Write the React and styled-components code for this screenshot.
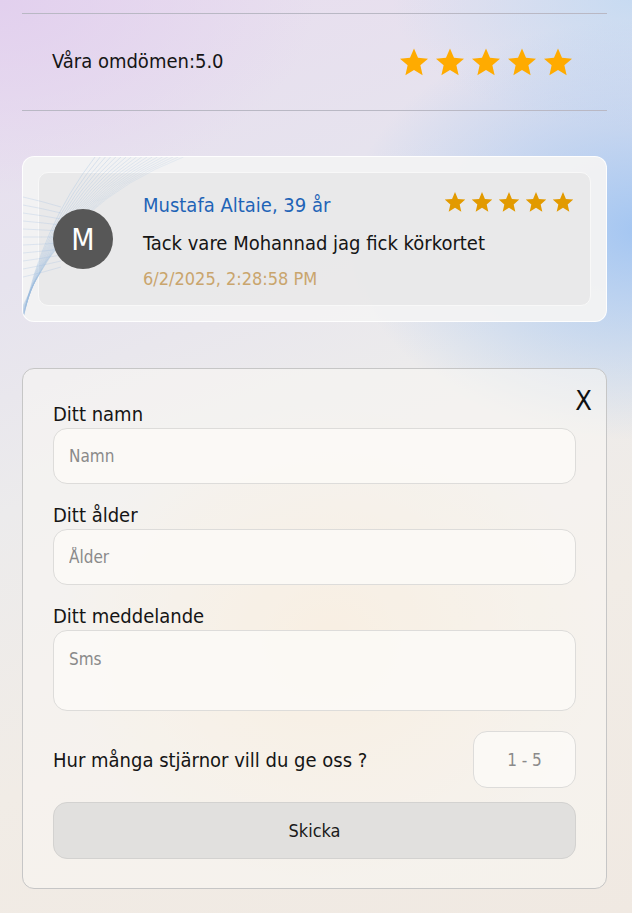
import React from "react";
import styled, { createGlobalStyle } from "styled-components";

const Global = createGlobalStyle`
  html, body { margin: 0; padding: 0; }
  body {
    min-height: 913px;
    font-family: "DejaVu Sans Condensed", "Roboto", sans-serif;
    color: #111;
    background:
      radial-gradient(ellipse 420px 300px at 640px 230px, rgba(160,196,242,0.95), rgba(160,196,242,0) 70%),
      radial-gradient(ellipse 300px 160px at 632px 0px, rgba(196,218,242,0.9), rgba(196,218,242,0) 80%),
      radial-gradient(ellipse 420px 260px at 0px 0px, rgba(226,208,238,1), rgba(226,208,238,0) 75%),
      radial-gradient(ellipse 360px 320px at 330px 640px, rgba(246,228,204,0.95), rgba(246,228,204,0) 75%),
      linear-gradient(160deg, #e9ddef 0%, #e6e3ee 25%, #ecebec 45%, #f1ece6 70%, #f0e9e2 100%);
  }
`;

const Page = styled.div`
  width: 585px;
  margin-left: 22px;
  padding-top: 13px;
  padding-bottom: 24px;
`;

const Header = styled.div`
  display: flex;
  align-items: center;
  justify-content: space-between;
  height: 96px;
  border-top: 1px solid #b9b8c4;
  border-bottom: 1px solid #b9b8c4;
  padding: 0 34px 0 30px;
`;

const Title = styled.div`
  font-size: 20px;
  color: #151515;
  margin-top: -2px;
`;

const Stars = styled.div`
  display: flex;
  gap: ${(p) => p.$gap}px;
`;

const StarIcon = ({ size, color }) => (
  <svg width={size} height={size} viewBox="0 0 24 24">
    <path
      fill={color}
      d="M12 1.2l3.2 7.4 8 .7-6.1 5.3 1.8 7.9L12 18.3l-6.9 4.2 1.8-7.9L.8 9.3l8-.7z"
    />
  </svg>
);

const ReviewOuter = styled.div`
  position: relative;
  margin-top: 45px;
  padding: 15px;
  border-radius: 12px;
  background: rgba(242, 242, 242, 0.96);
  border: 1px solid rgba(255, 255, 255, 0.9);
  overflow: hidden;
`;

const Deco = styled.svg`
  position: absolute;
  left: 0;
  top: 0;
  pointer-events: none;
  z-index: 1;
`;

const ReviewInner = styled.div`
  position: relative;
  box-sizing: border-box;
  display: flex;
  align-items: center;
  gap: 30px;
  height: 134px;
  padding: 0 16px 0 14px;
  border-radius: 10px;
  background: rgba(232, 232, 232, 0.93);
  border: 1px solid #f8f8f8;
`;

const Avatar = styled.div`
  position: relative;
  z-index: 2;
  width: 60px;
  height: 60px;
  flex: none;
  border-radius: 50%;
  background: #575757;
  color: #fff;
  display: flex;
  align-items: center;
  justify-content: center;
  font-size: 30px;
`;

const ReviewBody = styled.div`
  flex: 1;
  display: flex;
  flex-direction: column;
  padding-top: 6px;
`;

const ReviewTop = styled.div`
  display: flex;
  justify-content: space-between;
  align-items: flex-start;
`;

const Name = styled.div`
  color: #1f64b7;
  font-size: 20px;
  line-height: 28px;
`;

const Message = styled.div`
  font-size: 20px;
  line-height: 28px;
  margin-top: 10px;
  color: #151515;
`;

const DateText = styled.div`
  font-size: 18px;
  line-height: 28px;
  margin-top: 8px;
  color: #c9a56d;
`;

const Form = styled.form`
  position: relative;
  margin-top: 46px;
  padding: 31px 30px 29px 30px;
  border-radius: 12px;
  border: 1px solid #c6c6c6;
  background: rgba(249, 247, 244, 0.55);
  display: flex;
  flex-direction: column;
`;

const Close = styled.div`
  position: absolute;
  right: 14px;
  top: 16px;
  font-size: 27px;
  color: #111;
`;

const Field = styled.div`
  display: flex;
  flex-direction: column;
  margin-top: ${(p) => (p.$first ? 0 : 17)}px;
`;

const Label = styled.label`
  font-size: 20px;
  line-height: 28px;
  color: #151515;
`;

const Input = styled.input`
  box-sizing: border-box;
  height: 56px;
  width: 100%;
  border: 1px solid #dddcda;
  border-radius: 14px;
  background: rgba(252, 250, 247, 0.85);
  padding: 0 15px;
  font-family: inherit;
  font-size: 17px;
  outline: none;
  &::placeholder { color: #8a8a8a; }
`;

const TextArea = styled.textarea`
  box-sizing: border-box;
  height: 81px;
  width: 100%;
  border: 1px solid #dddcda;
  border-radius: 14px;
  background: rgba(252, 250, 247, 0.85);
  padding: 18px 15px;
  font-family: inherit;
  font-size: 17px;
  resize: none;
  outline: none;
  &::placeholder { color: #8a8a8a; }
`;

const RatingRow = styled.div`
  display: flex;
  align-items: center;
  justify-content: space-between;
  margin-top: 20px;
`;

const RatingInput = styled(Input)`
  width: 103px;
  height: 57px;
  text-align: center;
  padding: 0;
`;

const Button = styled.button`
  margin-top: 14px;
  height: 57px;
  width: 100%;
  border: 1px solid #d3d2d0;
  border-radius: 14px;
  background: #e1e0de;
  font-family: inherit;
  font-size: 18px;
  color: #1a1a1a;
`;

const fan = Array.from({ length: 18 }, (_, i) => i);
const cross = Array.from({ length: 11 }, (_, i) => i);

export default function App() {
  return (
    <>
      <Global />
      <Page>
        <Header>
          <Title>Våra omdömen:5.0</Title>
          <Stars $gap={6}>
            {[0, 1, 2, 3, 4].map((i) => (
              <StarIcon key={i} size={30} color="#ffab00" />
            ))}
          </Stars>
        </Header>

        <ReviewOuter>
          <ReviewInner>
            <Avatar>M</Avatar>
            <ReviewBody>
              <ReviewTop>
                <Name>Mustafa Altaie, 39 år</Name>
                <Stars $gap={5}>
                  {[0, 1, 2, 3, 4].map((i) => (
                    <StarIcon key={i} size={22} color="#e29a00" />
                  ))}
                </Stars>
              </ReviewTop>
              <Message>Tack vare Mohannad jag fick körkortet</Message>
              <DateText>6/2/2025, 2:28:58 PM</DateText>
            </ReviewBody>
          </ReviewInner>
          <Deco width="170" height="166" viewBox="0 0 170 166">
            {fan.map((i) => (
              <path
                key={i}
                d={`M0 ${162 - i * 0.8} Q ${18 + i * 1.6} ${70 - i * 1.5} ${72 + i * 5.2} 0`}
                fill="none"
                stroke="#9dbde0"
                strokeWidth="0.6"
                opacity={0.55 - i * 0.015}
              />
            ))}
            {cross.map((i) => (
              <path
                key={"c" + i}
                d={`M0 ${40 + i * 8} Q 18 ${44 + i * 7.2} 38 ${50 + i * 6}`}
                fill="none"
                stroke="#9dbde0"
                strokeWidth="0.6"
                opacity="0.45"
              />
            ))}
          </Deco>
        </ReviewOuter>

        <Form onSubmit={(e) => e.preventDefault()}>
          <Close>X</Close>
          <Field $first>
            <Label>Ditt namn</Label>
            <Input placeholder="Namn" />
          </Field>
          <Field>
            <Label>Ditt ålder</Label>
            <Input placeholder="Ålder" />
          </Field>
          <Field>
            <Label>Ditt meddelande</Label>
            <TextArea placeholder="Sms" />
          </Field>
          <RatingRow>
            <Label>Hur många stjärnor vill du ge oss ?</Label>
            <RatingInput placeholder="1 - 5" />
          </RatingRow>
          <Button type="submit">Skicka</Button>
        </Form>
      </Page>
    </>
  );
}
